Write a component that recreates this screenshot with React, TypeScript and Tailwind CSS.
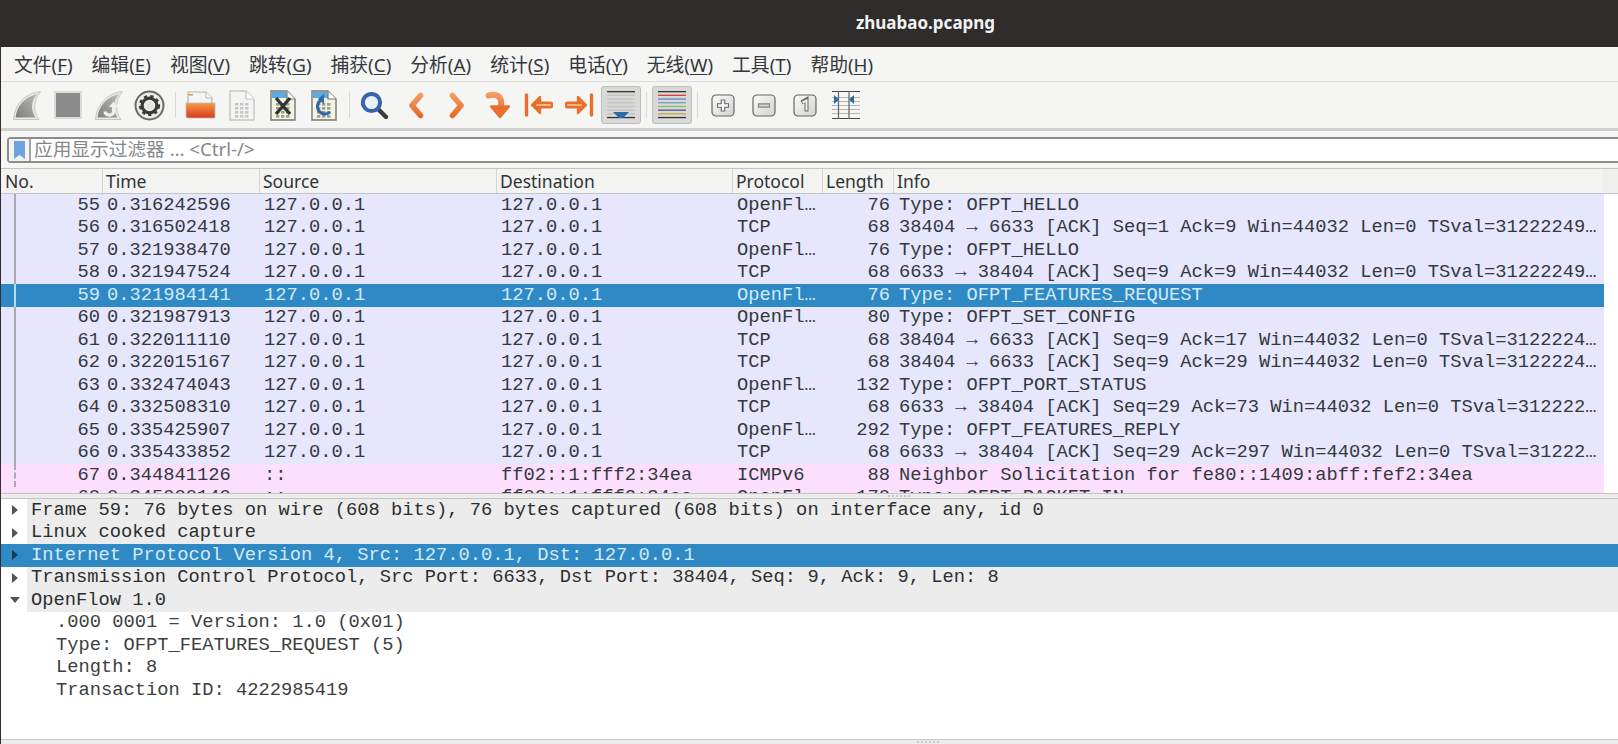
import React from "react";

const mono = "font-['Liberation_Mono',monospace] text-[18.75px] leading-none";
const ui = "font-['Noto_Sans','Noto_Sans_CJK_SC',sans-serif]";

const menus: [string, string][] = [
	["文件", "F"],
	["编辑", "E"],
	["视图", "V"],
	["跳转", "G"],
	["捕获", "C"],
	["分析", "A"],
	["统计", "S"],
	["电话", "Y"],
	["无线", "W"],
	["工具", "T"],
	["帮助", "H"],
];

interface Packet {
	no: number;
	time: string;
	src: string;
	dst: string;
	proto: string;
	len: number;
	info: string;
}

const packets: Packet[] = [
	{ no: 55, time: "0.316242596", src: "127.0.0.1", dst: "127.0.0.1", proto: "OpenFl…", len: 76, info: "Type: OFPT_HELLO" },
	{ no: 56, time: "0.316502418", src: "127.0.0.1", dst: "127.0.0.1", proto: "TCP", len: 68, info: "38404 → 6633 [ACK] Seq=1 Ack=9 Win=44032 Len=0 TSval=31222249…" },
	{ no: 57, time: "0.321938470", src: "127.0.0.1", dst: "127.0.0.1", proto: "OpenFl…", len: 76, info: "Type: OFPT_HELLO" },
	{ no: 58, time: "0.321947524", src: "127.0.0.1", dst: "127.0.0.1", proto: "TCP", len: 68, info: "6633 → 38404 [ACK] Seq=9 Ack=9 Win=44032 Len=0 TSval=31222249…" },
	{ no: 59, time: "0.321984141", src: "127.0.0.1", dst: "127.0.0.1", proto: "OpenFl…", len: 76, info: "Type: OFPT_FEATURES_REQUEST" },
	{ no: 60, time: "0.321987913", src: "127.0.0.1", dst: "127.0.0.1", proto: "OpenFl…", len: 80, info: "Type: OFPT_SET_CONFIG" },
	{ no: 61, time: "0.322011110", src: "127.0.0.1", dst: "127.0.0.1", proto: "TCP", len: 68, info: "38404 → 6633 [ACK] Seq=9 Ack=17 Win=44032 Len=0 TSval=3122224…" },
	{ no: 62, time: "0.322015167", src: "127.0.0.1", dst: "127.0.0.1", proto: "TCP", len: 68, info: "38404 → 6633 [ACK] Seq=9 Ack=29 Win=44032 Len=0 TSval=3122224…" },
	{ no: 63, time: "0.332474043", src: "127.0.0.1", dst: "127.0.0.1", proto: "OpenFl…", len: 132, info: "Type: OFPT_PORT_STATUS" },
	{ no: 64, time: "0.332508310", src: "127.0.0.1", dst: "127.0.0.1", proto: "TCP", len: 68, info: "6633 → 38404 [ACK] Seq=29 Ack=73 Win=44032 Len=0 TSval=312222…" },
	{ no: 65, time: "0.335425907", src: "127.0.0.1", dst: "127.0.0.1", proto: "OpenFl…", len: 292, info: "Type: OFPT_FEATURES_REPLY" },
	{ no: 66, time: "0.335433852", src: "127.0.0.1", dst: "127.0.0.1", proto: "TCP", len: 68, info: "6633 → 38404 [ACK] Seq=29 Ack=297 Win=44032 Len=0 TSval=31222…" },
	{ no: 67, time: "0.344841126", src: "::", dst: "ff02::1:fff2:34ea", proto: "ICMPv6", len: 88, info: "Neighbor Solicitation for fe80::1409:abff:fef2:34ea" },
	{ no: 68, time: "0.345000140", src: "::", dst: "ff02::1:fff2:34ea", proto: "OpenFl…", len: 170, info: "Type: OFPT_PACKET_IN" },
];

const tree = [
	{ text: "Frame 59: 76 bytes on wire (608 bits), 76 bytes captured (608 bits) on interface any, id 0" },
	{ text: "Linux cooked capture" },
	{ text: "Internet Protocol Version 4, Src: 127.0.0.1, Dst: 127.0.0.1", selected: true },
	{ text: "Transmission Control Protocol, Src Port: 6633, Dst Port: 38404, Seq: 9, Ack: 9, Len: 8" },
	{ text: "OpenFlow 1.0", open: true },
];

const fields = [".000 0001 = Version: 1.0 (0x01)", "Type: OFPT_FEATURES_REQUEST (5)", "Length: 8", "Transaction ID: 4222985419"];

function Fin({ id, restart }: { id: string; restart?: boolean }) {
	return (
		<svg width="30" height="31" viewBox="0 0 30 31">
			<defs>
				<linearGradient id={id} x1="1" y1="0" x2="0" y2="1">
					<stop offset="0" stopColor="#b9b9b7" />
					<stop offset="1" stopColor="#7f7f7f" />
				</linearGradient>
			</defs>
			<path d="M28.5 1.5 C14 3 2.5 14 1.5 29.5 L27 29.5 C20.5 21 21.5 10 28.5 1.5 Z" fill="#e9e9e7" stroke="#c6c6c4" strokeWidth="1" />
			<path d="M25 4 C13 7 4.5 16 3.5 27.5 L23.5 27.5 C18.5 20 19 11 25 4 Z" fill={`url(#${id})`} />
			{restart && (
				<>
					<path d="M19.5 15 V21.5 C19.5 26.5 11.5 26 11 21.5" fill="none" stroke="#f0f0ee" strokeWidth="3.2" />
					<path d="M15 17 L19.5 11.5 L24 17 Z" fill="#f0f0ee" />
				</>
			)}
		</svg>
	);
}

function Stop() {
	return (
		<svg width="28" height="28" viewBox="0 0 28 28">
			<rect x="1" y="1" width="26" height="26" fill="#8b8b8b" stroke="#dcdcda" strokeWidth="2" />
		</svg>
	);
}

function Gear() {
	return (
		<svg width="31" height="31" viewBox="0 0 31 31">
			<circle cx="15.5" cy="15.5" r="14" fill="#ecece9" stroke="#6a6a6a" strokeWidth="2" />
			<circle cx="15.5" cy="15.5" r="7.4" fill="none" stroke="#3a3a3a" strokeWidth="3.2" />
			<circle cx="15.5" cy="15.5" r="9.4" fill="none" stroke="#3a3a3a" strokeWidth="2.4" strokeDasharray="3.2 3.2" />
			<circle cx="15.5" cy="15.5" r="3.4" fill="#e3e3e1" />
		</svg>
	);
}

function Sheet({ tint, children }: { tint?: boolean; children?: React.ReactNode }) {
	const dots = [];
	for (let y = 13; y < 28; y += 4) {
		for (let x = 6; x < 21; x += 5) {
			dots.push(<rect key={`${x}-${y}`} x={x} y={y} width="3.4" height="2.6" fill={tint ? "#9a9f94" : "#c6c6c6"} />);
		}
	}
	return (
		<svg width="26" height="31" viewBox="0 0 26 31">
			<path d="M1 1 H17 L25 9 V30 H1 Z" fill={tint ? "#f3f3df" : "#f4f4f3"} stroke={tint ? "#777" : "#c6c6c6"} strokeWidth="1.4" />
			{tint && <path d="M2 2 H16 L18 8 H2 Z" fill="#5fa8de" />}
			<path d="M17 1 V9 H25" fill="#fff" stroke={tint ? "#777" : "#c6c6c6"} strokeWidth="1.2" />
			{dots}
			{children}
		</svg>
	);
}

function Folder() {
	return (
		<svg width="31" height="28" viewBox="0 0 31 28">
			<defs>
				<linearGradient id="folder" x1="0" y1="0" x2="0" y2="1">
					<stop offset="0" stopColor="#f59a4a" />
					<stop offset="1" stopColor="#d9391a" />
				</linearGradient>
			</defs>
			<path d="M3 13 V1 H21 L27 7 V15" fill="#f5f5f3" stroke="#b5b5b3" strokeWidth="1.2" />
			<rect x="3" y="3" width="5" height="1.5" fill="#f09030" />
			<path d="M21 1 V7 H27" fill="#fff" stroke="#b5b5b3" strokeWidth="1" />
			<path d="M1 12 H30 V27 H3 Q1 27 1 25 Z" fill="url(#folder)" stroke="#bcbcba" strokeWidth="0.8" />
		</svg>
	);
}

function Search() {
	return (
		<svg width="29" height="29" viewBox="0 0 29 29">
			<path d="M18 18 L26 26" stroke="#3c3c3c" strokeWidth="4.4" strokeLinecap="round" />
			<circle cx="11.5" cy="11.5" r="8.6" fill="#e9f1f8" stroke="#3a63ad" strokeWidth="4" />
		</svg>
	);
}

const orange = "#e96f2c";

function Grad({ id }: { id: string }) {
	return (
		<defs>
			<linearGradient id={id} gradientUnits="userSpaceOnUse" x1="0" y1="0" x2="0" y2="28">
				<stop offset="0" stopColor="#f2a468" />
				<stop offset="1" stopColor="#e5601f" />
			</linearGradient>
		</defs>
	);
}

function Chevron({ id, flip }: { id: string; flip?: boolean }) {
	return (
		<svg width="16" height="27" viewBox="0 0 16 27" className={flip ? "-scale-x-100" : ""}>
			<Grad id={id} />
			<path d="M12.5 3.5 L4 13.5 L12.5 23.5" fill="none" stroke={`url(#${id})`} strokeWidth="5.6" strokeLinecap="round" strokeLinejoin="round" />
		</svg>
	);
}

function GoTo() {
	return (
		<svg width="26" height="28" viewBox="0 0 26 28">
			<Grad id="goto" />
			<path d="M3.5 4.5 C13 1.5 18 7 15.5 17" fill="none" stroke="url(#goto)" strokeWidth="6" strokeLinecap="round" />
			<path d="M6 15.5 H24 L15 26 Z" fill={orange} stroke={orange} strokeWidth="2.4" strokeLinejoin="round" />
		</svg>
	);
}

function Edge({ flip }: { flip?: boolean }) {
	return (
		<svg width="29" height="24" viewBox="0 0 29 24" className={flip ? "-scale-x-100" : ""}>
			<path d="M2.5 2 V22" stroke={orange} strokeWidth="3.4" strokeLinecap="round" />
			<path d="M14 12 H26" stroke={orange} strokeWidth="7" strokeLinecap="round" />
			<path d="M8 12 L16 4 V20 Z" fill={orange} stroke={orange} strokeWidth="2.4" strokeLinejoin="round" />
			<path d="M13 12 H26" stroke="#f4b483" strokeWidth="2" strokeLinecap="round" />
		</svg>
	);
}

function Lines({ colors, arrow }: { colors: string[]; arrow?: boolean }) {
	return (
		<svg width="28" height="28" viewBox="0 0 28 28">
			{colors.map((c, i) => (
				<rect key={i} x="0" y={i * 3.7} width="28" height="1.3" fill={c} />
			))}
			{arrow && <path d="M12 27 L6 21 H22 L16 27 Z" fill="#2c69a8" />}
		</svg>
	);
}

function Key({ id, kind }: { id: string; kind: "plus" | "minus" | "one" }) {
	return (
		<svg width="24" height="23" viewBox="0 0 24 23">
			<defs>
				<linearGradient id={id} x1="0" y1="0" x2="1" y2="1">
					<stop offset="0" stopColor="#fbfbfa" />
					<stop offset="1" stopColor="#d2d2d0" />
				</linearGradient>
			</defs>
			<rect x="1" y="1" width="22" height="21" rx="4" fill={`url(#${id})`} stroke="#666" strokeWidth="1.2" />
			{kind === "plus" && (
				<>
					<path d="M12 5.5 V17.5 M6 11.5 H18" stroke="#666" strokeWidth="4.6" />
					<path d="M12 6.5 V16.5 M7 11.5 H17" stroke="#f6f6f6" strokeWidth="2.4" />
				</>
			)}
			{kind === "minus" && (
				<>
					<path d="M6 11.5 H18" stroke="#7c7c7c" strokeWidth="4.4" />
					<path d="M7 11.5 H17" stroke="#d8d8d6" strokeWidth="2" />
				</>
			)}
			{kind === "one" && (
				<>
					<path d="M8.5 8.5 L13.5 5.5 V17.5" fill="none" stroke="#666" strokeWidth="4" />
					<path d="M9.5 8.5 L13.5 6.5 V16.5" fill="none" stroke="#f0f0ee" strokeWidth="2" />
				</>
			)}
		</svg>
	);
}

function Resize() {
	return (
		<svg width="28" height="28" viewBox="0 0 28 28">
			{[0, 6, 10, 14, 18, 22, 27].map((y) => (
				<rect key={y} x="0" y={y} width="28" height="1" fill={y === 0 || y === 27 ? "#444" : "#b5b5b0"} />
			))}
			<path d="M6.5 0 V28 M17 0 V28" stroke="#666" strokeWidth="1.2" />
			<path d="M2 4 L7 8.5 L2 13 Z" fill="#2c69a8" />
			<path d="M22 4 L17 8.5 L22 13 Z" fill="#2c69a8" />
		</svg>
	);
}

function Tool({ pressed, children }: { pressed?: boolean; children: React.ReactNode }) {
	return (
		<div className="flex h-full w-[41px] shrink-0 items-center justify-center">
			{pressed ? (
				<div className="flex h-[38px] w-[40px] items-center justify-center rounded-[3px] border border-[#bdbdbb] bg-[#d9d9d7]">{children}</div>
			) : (
				children
			)}
		</div>
	);
}

function Sep() {
	return (
		<div className="flex h-full w-[10px] shrink-0 items-center justify-center">
			<div className="h-[26px] w-px bg-[#d9d9d7]" />
		</div>
	);
}

function Toolbar() {
	return (
		<div className="flex h-[49px] shrink-0 items-center border-b-[3px] border-[#cfcfcd] bg-[#f5f5f4] pl-[5px]">
			<Tool><Fin id="fin-a" /></Tool>
			<Tool><Stop /></Tool>
			<Tool><Fin id="fin-b" restart /></Tool>
			<Tool><Gear /></Tool>
			<Sep />
			<Tool><Folder /></Tool>
			<Tool><Sheet /></Tool>
			<Tool>
				<Sheet tint>
					<path d="M6 8 L20 24 M20 8 L6 24" stroke="#333" strokeWidth="3.4" />
				</Sheet>
			</Tool>
			<Tool>
				<Sheet tint>
					<path d="M19 22 A7.5 7.5 0 1 1 13 9" fill="none" stroke="#2f68b0" strokeWidth="3" />
					<path d="M13 4 L13 14 L7 9 Z" fill="#2f68b0" />
				</Sheet>
			</Tool>
			<Sep />
			<Tool><Search /></Tool>
			<Tool><Chevron id="chev-a" /></Tool>
			<Tool><Chevron id="chev-b" flip /></Tool>
			<Tool><GoTo /></Tool>
			<Tool><Edge /></Tool>
			<Tool><Edge flip /></Tool>
			<Tool pressed>
				<Lines arrow colors={["#333", "#c4c4be", "#c4c4be", "#c4c4be", "#c4c4be", "#c4c4be", "#c4c4be", "#333"]} />
			</Tool>
			<Sep />
			<Tool pressed>
				<Lines colors={["#333", "#e03c3c", "#5d86c9", "#6aa4c8", "#8cc04a", "#5b4f8f", "#caa83c", "#333"]} />
			</Tool>
			<Sep />
			<Tool><Key id="key-a" kind="plus" /></Tool>
			<Tool><Key id="key-b" kind="minus" /></Tool>
			<Tool><Key id="key-c" kind="one" /></Tool>
			<Tool><Resize /></Tool>
		</div>
	);
}

function HeaderCell({ label, className }: { label: string; className: string }) {
	return (
		<div className={`flex h-full shrink-0 items-center border-r border-[#d5d5d3] text-[17.5px] text-[#2e3436] ${className}`}>{label}</div>
	);
}

function PacketRow({ packet }: { packet: Packet }) {
	const selected = packet.no === 59;
	const bg = selected ? "bg-[#2e89c5] text-[#d4e9f6]" : packet.src === "::" ? "bg-[#fcdfff] text-[#33393d]" : "bg-[#e6e6fd] text-[#33393d]";
	return (
		<div className={`flex h-[22.5px] shrink-0 items-center whitespace-pre ${mono} ${bg}`}>
			<div className="flex h-full w-[102px] shrink-0 items-center">
				<div
					className={`ml-[13px] h-full w-0 border-l-2 ${selected ? "border-[#b9d8ec]" : "border-[#a9a9b5]"} ${packet.no === 67 ? "border-dashed" : ""} ${packet.no === 68 ? "hidden" : ""}`}
				/>
				<div className={`flex-1 pr-[3px] text-right ${packet.no === 68 ? "ml-[15px]" : ""}`}>{packet.no}</div>
			</div>
			<div className="w-[158px] shrink-0 pl-[4px]">{packet.time}</div>
			<div className="w-[237px] shrink-0 pl-[3px]">{packet.src}</div>
			<div className="w-[236px] shrink-0 pl-[3px]">{packet.dst}</div>
			<div className="w-[90px] shrink-0 pl-[3px]">{packet.proto}</div>
			<div className="w-[71px] shrink-0 pr-[5px] text-right">{packet.len}</div>
			<div className="min-w-0 flex-1 pl-[4px]">{packet.info}</div>
		</div>
	);
}

function Grip({ className }: { className: string }) {
	return <div className={`h-[2px] w-[22px] bg-[repeating-linear-gradient(to_right,#c8c8c8_0px,#c8c8c8_2px,transparent_2px,transparent_4px)] ${className}`} />;
}

export default function App() {
	return (
		<div className="flex h-screen w-full flex-col overflow-hidden border-l border-[#3a2a30] bg-white">
			<div className="flex h-[47px] shrink-0 items-center justify-center bg-[#2f2c2c] pb-[2px] pl-[232px] font-['Noto_Sans',sans-serif] text-[17px] font-bold text-[#f2f2f2]">
				zhuabao.pcapng
			</div>

			<div className={`flex h-[35px] shrink-0 items-center gap-[19px] border-b border-[#dcdcda] bg-[#f5f5f4] pl-[13px] pt-[2px] text-[18.8px] text-[#33383a] ${ui}`}>
				{menus.map(([label, key]) => (
					<div key={key} className="shrink-0">
						{label}(<span className="underline underline-offset-2">{key}</span>)
					</div>
				))}
			</div>

			<Toolbar />

			<div className="flex h-[37px] shrink-0 items-center bg-[#f5f5f4] pl-[6px]">
				<div className="flex h-[26px] w-full items-center rounded-l-[4px] border-y-2 border-l-2 border-[#8b8b89] bg-white">
					<div className="flex h-full w-[22px] shrink-0 items-center justify-center border-r-2 border-[#a5a5a3] bg-[#f3f3f1]">
						<svg width="11" height="18" viewBox="0 0 11 18">
							<path d="M0 0 H11 V18 L5.5 14 L0 18 Z" fill="#6ea3e0" />
						</svg>
					</div>
					<div className={`pl-[3px] text-[18.7px] text-[#85888a] ${ui}`}>应用显示过滤器 … &lt;Ctrl-/&gt;</div>
				</div>
			</div>

			<div className={`flex h-[26px] shrink-0 items-center border-y border-[#c4c4c2] bg-[#f3f3f2] pl-px ${ui}`}>
				<HeaderCell label="No." className="w-[101px] pl-[3px]" />
				<HeaderCell label="Time" className="w-[157px] pl-[3px]" />
				<HeaderCell label="Source" className="w-[237px] pl-[3px]" />
				<HeaderCell label="Destination" className="w-[236px] pl-[3px]" />
				<HeaderCell label="Protocol" className="w-[90px] pl-[3px]" />
				<HeaderCell label="Length" className="w-[71px] pl-[3px]" />
				<div className="flex h-full w-[709px] shrink-0 items-center pl-[3px] text-[17.5px] text-[#2e3436]">Info</div>
				<div className="h-full flex-1 bg-[#efefee]" />
			</div>

			<div className="flex h-[299px] shrink-0 flex-col overflow-hidden pr-[14px]">
				{packets.map((p) => (
					<PacketRow key={p.no} packet={p} />
				))}
			</div>

			<div className="flex h-[6px] shrink-0 items-center justify-center border-y border-[#c4c4c2] bg-[#ececeb] pl-[178px]">
				<Grip className="" />
			</div>

			<div className={`flex-1 overflow-hidden ${mono} whitespace-pre text-[#2c2f30]`}>
				{tree.map((row) => (
					<div
						key={row.text}
						className={`flex h-[22.5px] items-center ${row.selected ? "bg-[#2e89c5] text-[#d4e9f6]" : "bg-[linear-gradient(to_right,#ffffff_26px,#ececec_26px)]"}`}
					>
						<div className="flex w-[27px] shrink-0 items-center justify-center">
							{row.open ? (
								<svg width="10" height="6" viewBox="0 0 10 6">
									<path d="M0 0 H10 L5 6 Z" fill="#555" />
								</svg>
							) : (
								<svg width="6" height="10" viewBox="0 0 6 10">
									<path d="M0 0 L6 5 L0 10 Z" fill={row.selected ? "#1d3a4c" : "#555"} />
								</svg>
							)}
						</div>
						<div className="pl-[3px]">{row.text}</div>
					</div>
				))}
				{fields.map((f) => (
					<div key={f} className="flex h-[22.5px] items-center pl-[55px] text-[#3b3f41]">
						{f}
					</div>
				))}
			</div>

			<div className="flex h-[5px] shrink-0 items-start justify-center border-t border-[#c8c8c8] bg-[#ececec] pl-[236px]">
				<Grip className="mt-px" />
			</div>
		</div>
	);
}
